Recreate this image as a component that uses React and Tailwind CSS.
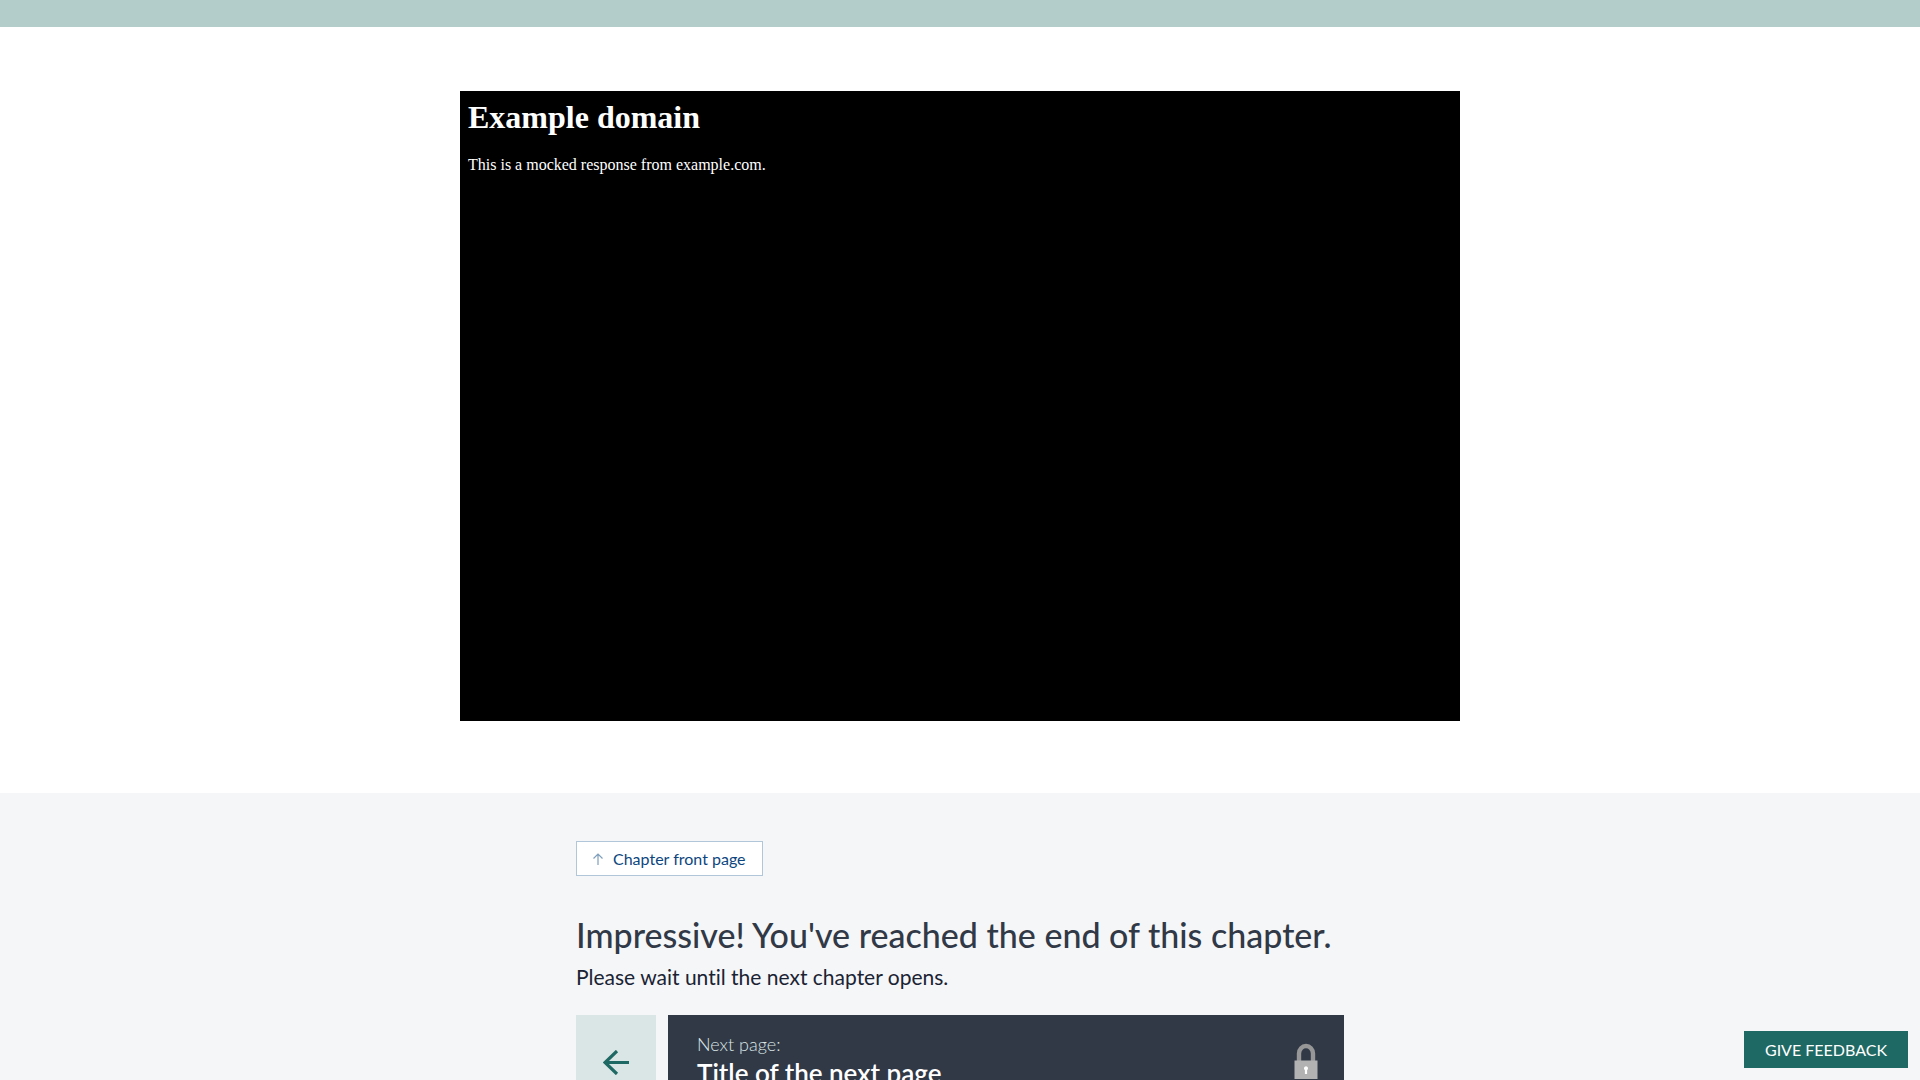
function ArrowUp() {
  return (
    <svg className="h-3 w-2.5" viewBox="0 0 10 12" fill="none" stroke="#7f9fbd" aria-hidden="true">
      <path d="M5 12V1M0.5 5.5L5 1L9.5 5.5" strokeWidth="1.2" />
    </svg>
  );
}

function ArrowLeft() {
  return (
    <svg className="h-[25px] w-[26px]" viewBox="0 0 26 25" fill="none" stroke="#1f6964" aria-hidden="true">
      <path d="M26 12.5H2M14 1L2 12.5L14 24" strokeWidth="3.2" />
    </svg>
  );
}

function Lock() {
  return (
    <svg className="h-9 w-6" viewBox="0 0 24 36" fill="none" aria-hidden="true">
      <path d="M5 18V10.5a7 7.5 0 0 1 14 0V18" stroke="#979797" strokeWidth="4.4" />
      <path d="M0.5 17.5h23V36h-23z" fill="#b2b2b2" />
      <path d="M12 23.2a2.2 2.2 0 0 1 1.1 4V31h-2.2v-3.8a2.2 2.2 0 0 1 1.1-4z" fill="#fff" />
    </svg>
  );
}

export default function App() {
  return (
    <div className="h-screen overflow-hidden bg-white font-['Lato',sans-serif] [font-variant-ligatures:none]">
      <div className="h-[27px] bg-[#b3cdca]" />
      <main className="px-4 pt-16 pb-[72px]">
        <section className="mx-auto min-h-[630px] max-w-[1000px] bg-black p-2 font-['Liberation_Serif',serif] text-white">
          <h1 className="text-[32px] leading-9 font-bold">Example domain</h1>
          <p className="mt-5 text-base leading-5">This is a mocked response from example.com.</p>
        </section>
      </main>
      <footer className="bg-[#f5f6f8] px-4 pt-12 pb-20">
        <div className="mx-auto max-w-[768px]">
          <a
            href="#chapter"
            className="inline-flex h-[35px] items-center gap-2.5 border border-[#b1c6d9] bg-white px-4 text-base text-[#0c4680]"
          >
            <ArrowUp />
            Chapter front page
          </a>
          <h2 className="mt-[39px] text-[34px] leading-10 font-medium text-[#313947]">
            Impressive! You've reached the end of this chapter.
          </h2>
          <p className="mt-2 text-[21px] leading-7 text-[#1a2333]">Please wait until the next chapter opens.</p>
          <div className="mt-6 flex gap-3">
            <a
              href="#previous"
              aria-label="Previous page"
              className="flex w-20 items-center justify-center bg-[#dae6e5]"
            >
              <ArrowLeft />
            </a>
            <div className="flex h-[94px] flex-1 justify-between bg-[#313947] pt-4 pr-[26px] pl-[29px]">
              <div>
                <p className="text-lg leading-[26px] font-light text-[#dae6e5]">Next page:</p>
                <p className="text-[26px] leading-8 font-semibold text-white">Title of the next page</p>
              </div>
              <div className="pt-3">
                <Lock />
              </div>
            </div>
          </div>
        </div>
      </footer>
      <button
        type="button"
        className="fixed right-3 bottom-3 h-[37px] bg-[#1f6964] px-[21px] text-base text-white"
      >
        GIVE FEEDBACK
      </button>
    </div>
  );
}
